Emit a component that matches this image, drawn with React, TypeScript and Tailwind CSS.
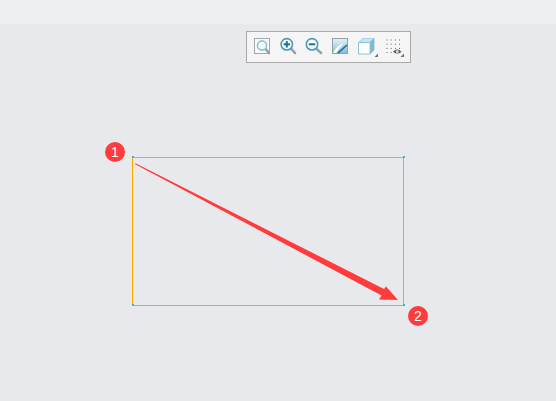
function Glass({ cx, cy, r, ex, ey, kind }: { cx: number; cy: number; r: number; ex: number; ey: number; kind: "plus" | "minus" | "plain" }) {
  return (
    <>
      <line x1={cx + r * 0.75} y1={cy + r * 0.75} x2={ex} y2={ey} stroke="#9ba0a4" strokeWidth="2.6" strokeLinecap="round" />
      <circle cx={cx} cy={cy} r={r} fill="#f4f9fb" stroke={kind === "plain" ? "#8fc3da" : "#4b98b8"} strokeWidth="1.6" />
      {kind !== "plain" && <line x1={cx - 3.2} y1={cy} x2={cx + 3.2} y2={cy} stroke="#1f6f96" strokeWidth="2" />}
      {kind === "plus" && <line x1={cx} y1={cy - 3.2} x2={cx} y2={cy + 3.2} stroke="#1f6f96" strokeWidth="2" />}
    </>
  );
}

function Corner({ x, y }: { x: number; y: number }) {
  return <polygon points={`${x},${y - 3.5} ${x},${y} ${x - 3.5},${y}`} fill="#6b7075" />;
}

const dots: [number, number][] = [];
for (const y of [39.5, 43.7, 47.9, 52]) {
  for (const x of [386.5, 390.7, 394.9, 399]) {
    if (!(y === 52 && x > 392)) dots.push([x, y]);
  }
}

export default function App() {
  return (
    <div className="relative w-[556px] h-[401px] overflow-hidden bg-[#e8e9ed] font-['Liberation_Sans',sans-serif]">
      <div className="h-6 bg-[#eeeff1]" />

      <div className="absolute left-[246px] top-[31px] w-[165px] h-[32px] border border-[#a8a8a8] bg-[#f5f5f6] flex pl-[6px]">
        <svg width="26" height="30" viewBox="253 32 26 30">
          <rect x="254.5" y="38.5" width="15" height="15" fill="#fafafa" stroke="#a5a8aa" />
          <Glass cx={262} cy={45.5} r={4.6} ex={269} ey={53} kind="plain" />
        </svg>
        <svg width="26" height="30" viewBox="279 32 26 30">
          <Glass cx={286.8} cy={44.3} r={5.7} ex={295} ey={53} kind="plus" />
        </svg>
        <svg width="26" height="30" viewBox="305 32 26 30">
          <Glass cx={312} cy={44.3} r={5.7} ex={321} ey={53} kind="minus" />
        </svg>
        <svg width="26" height="30" viewBox="331 32 26 30">
          <defs>
            <linearGradient id="skyGrad" x1="0" y1="0" x2="0" y2="1">
              <stop offset="0" stopColor="#e4f2f8" />
              <stop offset="1" stopColor="#7fbdd6" />
            </linearGradient>
          </defs>
          <rect x="332.5" y="38.5" width="15" height="15" fill="url(#skyGrad)" stroke="#9a9ea1" />
          <path d="M333 53 L333.5 52 C336 47.5 339 45 343.5 43 L336 53 Z" fill="#ffffff" />
          <line x1="338" y1="53" x2="347" y2="45" stroke="#236a90" strokeWidth="1.6" />
        </svg>
        <svg width="26" height="30" viewBox="357 32 26 30">
          <polygon points="358.5,42.5 362.5,38.5 374,38.5 370,42.5" fill="#c4e6f1" stroke="#9ccde0" strokeWidth="0.8" />
          <polygon points="370,42.5 374,38.5 374,50 370,54" fill="#7db9d3" stroke="#7db9d3" strokeWidth="0.8" />
          <rect x="358.5" y="42.5" width="11.5" height="11.5" fill="#ffffff" stroke="#8cc4da" />
          <Corner x={378} y={57} />
        </svg>
        <svg width="27" height="30" viewBox="383 32 27 30">
          {dots.map(([x, y]) => (
            <rect key={`${x}-${y}`} x={x} y={y} width="1" height="1" fill="#5f6367" />
          ))}
          <path d="M393 51.7 Q397.3 47.5 401.5 51.7 Q397.3 55.5 393 51.7 Z" fill="#555a5e" />
          <circle cx="397.3" cy="51.6" r="1.5" fill="#d8dadb" />
          <Corner x={404} y={57} />
        </svg>
      </div>

      <svg className="absolute left-0 top-0" width="556" height="401" viewBox="0 0 556 401">
        <rect x="132.5" y="157.5" width="271" height="148" fill="none" stroke="#ffa500" strokeWidth="1" />
        <rect x="132" y="156" width="2" height="2" fill="#3fb4cf" />
        <rect x="403" y="156" width="2" height="2" fill="#3fb4cf" />
        <rect x="132" y="304" width="2" height="2" fill="#3fb4cf" />
        <rect x="403" y="304" width="2" height="2" fill="#3fb4cf" />
        <path d="M135.5 163.2 L384 289 L386 286.5 L398 300 L379 299.5 L381.5 295.5 L135.2 164.2 Z" fill="#ff3b3b" />
      </svg>

      <div className="absolute left-[105px] top-[142px] w-5 h-5 rounded-full bg-[#ff3b3b] text-white text-[14px] leading-5 text-center">1</div>
      <div className="absolute left-[408px] top-[306px] w-5 h-5 rounded-full bg-[#ff3b3b] text-white text-[14px] leading-5 text-center">2</div>
    </div>
  );
}
